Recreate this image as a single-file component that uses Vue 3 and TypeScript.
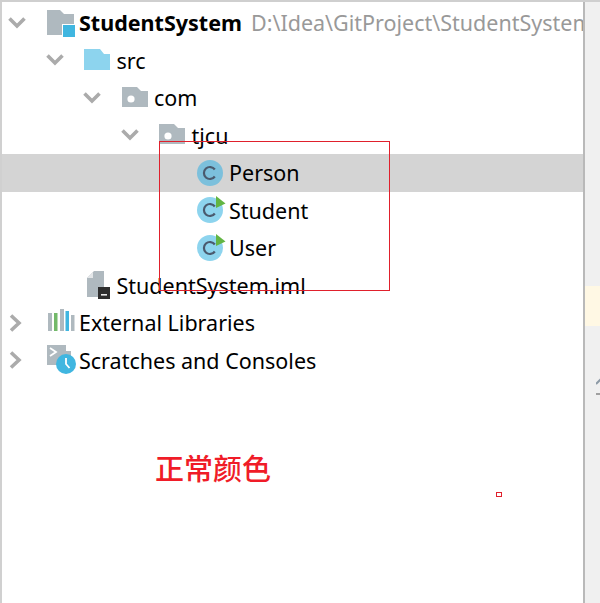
<script setup lang="ts">
type RowKind = 'project' | 'source' | 'package' | 'class' | 'runnable' | 'file' | 'libraries' | 'scratches'

interface TreeRow {
  label: string
  depth: number
  kind: RowKind
  arrow?: 'down' | 'right'
  hint?: string
  selected?: boolean
}

const rows: TreeRow[] = [
  { label: 'StudentSystem', depth: 0, kind: 'project', arrow: 'down', hint: 'D:\\Idea\\GitProject\\StudentSystem' },
  { label: 'src', depth: 1, kind: 'source', arrow: 'down' },
  { label: 'com', depth: 2, kind: 'package', arrow: 'down' },
  { label: 'tjcu', depth: 3, kind: 'package', arrow: 'down' },
  { label: 'Person', depth: 4, kind: 'class', selected: true },
  { label: 'Student', depth: 4, kind: 'runnable' },
  { label: 'User', depth: 4, kind: 'runnable' },
  { label: 'StudentSystem.iml', depth: 1, kind: 'file' },
  { label: 'External Libraries', depth: 0, kind: 'libraries', arrow: 'right' },
  { label: 'Scratches and Consoles', depth: 0, kind: 'scratches', arrow: 'right' }
]
</script>

<template>
  <div class="window">
    <div class="project-pane">
      <div class="tree">
        <div
          v-for="row in rows"
          :key="row.label"
          class="tree-row"
          :class="{ selected: row.selected }"
          :style="{ paddingLeft: `${8 + row.depth * 37.5}px` }"
        >
          <span class="arrow">
            <svg v-if="row.arrow === 'down'" width="18" height="14" viewBox="0 0 18 14">
              <path d="M1.500 2.500l7.500 7.500 7.500-7.500" fill="none" stroke="#ababab" stroke-width="3.600" />
            </svg>
            <svg v-else-if="row.arrow === 'right'" width="18" height="18" viewBox="0 0 18 18">
              <path d="M3 1.500l8 7.500-8 7.500" fill="none" stroke="#ababab" stroke-width="3.600" />
            </svg>
          </span>

          <svg class="icon" width="32" height="30" viewBox="0 0 32 30">
            <g v-if="row.kind === 'project'">
              <path d="M0 2h13l4 4h10v21H0z" fill="#afb9bf" />
              <rect x="15" y="16" width="14" height="14" fill="#fff" />
              <rect x="16" y="17" width="12" height="12" fill="#40b6e0" />
            </g>
            <path v-else-if="row.kind === 'source'" d="M0 4h16l4 5h6v16H0z" fill="#8dd4ee" />
            <g v-else-if="row.kind === 'package'">
              <path d="M0 4h15l4 4h7v16H0z" fill="#afb9bf" />
              <circle cx="9" cy="16" r="3.600" fill="#fff" />
            </g>
            <g v-else-if="row.kind === 'class' || row.kind === 'runnable'">
              <circle cx="13" cy="15" r="13" :fill="row.selected ? '#7cc0dc' : '#8dd4ee'" />
              <path d="M17.800 11.500a6 6 0 1 0 0 7" fill="none" stroke="#4a5a6e" stroke-width="2.200" />
              <path v-if="row.kind === 'runnable'" d="M19 1l9.500 7.500L19 13z" fill="#62b543" />
            </g>
            <g v-else-if="row.kind === 'file'">
              <path d="M10 1h10v20h-6v6H3V8z" fill="#afb9bf" />
              <path d="M9 2v6H3z" fill="#e3e6e8" />
              <rect x="14" y="17" width="12" height="12" fill="#2d2d2d" />
              <rect x="17" y="24" width="6" height="1.600" fill="#e8e8e8" />
            </g>
            <g v-else-if="row.kind === 'libraries'">
              <rect x="1" y="5" width="4" height="18" fill="#afb9bf" />
              <rect x="7" y="5" width="3.500" height="18" fill="#73b96a" />
              <rect x="13" y="1" width="4" height="22" fill="#afb9bf" />
              <rect x="18.500" y="3" width="3.500" height="20" fill="#40b6e0" />
              <rect x="24" y="7" width="3.500" height="16" fill="#afb9bf" />
            </g>
            <g v-else-if="row.kind === 'scratches'">
              <path d="M0 0h19v6h5v5l-5 3-5 6H0z" fill="#afb9bf" />
              <path d="M3 3l6 4-6 4" fill="none" stroke="#fff" stroke-width="1.800" />
              <circle cx="19" cy="19" r="10" fill="#40b6e0" />
              <path d="M19 13v6l3.500 4" fill="none" stroke="#fff" stroke-width="1.800" />
            </g>
          </svg>

          <span class="label" :class="{ strong: row.kind === 'project' }">{{ row.label }}</span>
          <span v-if="row.hint" class="hint">{{ row.hint }}</span>
        </div>
      </div>

      <p class="caption">正常颜色</p>
    </div>

    <aside class="gutter">
      <div class="gutter-mark"></div>
      <svg class="gutter-glyph" width="6" height="20" viewBox="0 0 6 20">
        <path d="M0 6l5-5" fill="none" stroke="#8d9aa6" stroke-width="2" />
        <rect y="15" width="5" height="2" fill="#a0a0a0" />
      </svg>
    </aside>

    <!-- annotations drawn over the screenshot -->
    <div class="annotation-box"></div>
    <div class="annotation-dot"></div>
  </div>
</template>

<style scoped>
.window {
  position: relative;
  display: flex;
  width: 600px;
  height: 603px;
  overflow: hidden;
  background: #fff;
  border-top: 2px solid #cfcfcf;
  box-sizing: border-box;
  font-family: "Noto Sans", "Noto Sans CJK SC", sans-serif;
}

.project-pane {
  width: 583px;
  flex: none;
  box-sizing: border-box;
  border-left: 2px solid #d0d0d0;
  overflow: hidden;
}

.tree {
  padding-top: 2px;
  margin-left: -2px;
}

.tree-row {
  display: flex;
  align-items: center;
  height: 37.500px;
  white-space: nowrap;
  font-size: 21.500px;
  color: #000;
}

.tree-row.selected {
  background: #d4d4d4;
}

.arrow {
  display: flex;
  align-items: center;
  width: 38.500px;
  flex: none;
}

.icon {
  flex: none;
  overflow: visible;
}

.label {
  margin-left: 0.500px;
}

.label.strong {
  font-weight: 700;
}

.hint {
  margin-left: 9px;
  color: #999;
}

.caption {
  margin: 72px 0 0 153px;
  font-size: 29px;
  font-weight: 500;
  line-height: 36px;
  color: #f01c28;
}

.gutter {
  flex: 1;
  background: #f0f0f0;
  border-left: 2px solid #b9b9b9;
}

.gutter-mark {
  height: 40px;
  margin-top: 284px;
  background: #fff8e4;
}

.gutter-glyph {
  display: block;
  margin: 52px 0 0 11px;
}

.annotation-box {
  position: absolute;
  left: 159px;
  top: 139px;
  width: 229px;
  height: 148px;
  border: 1px solid #e0202c;
}

.annotation-dot {
  position: absolute;
  left: 496px;
  top: 490px;
  width: 4px;
  height: 3px;
  border: 1px solid #e0202c;
}
</style>
